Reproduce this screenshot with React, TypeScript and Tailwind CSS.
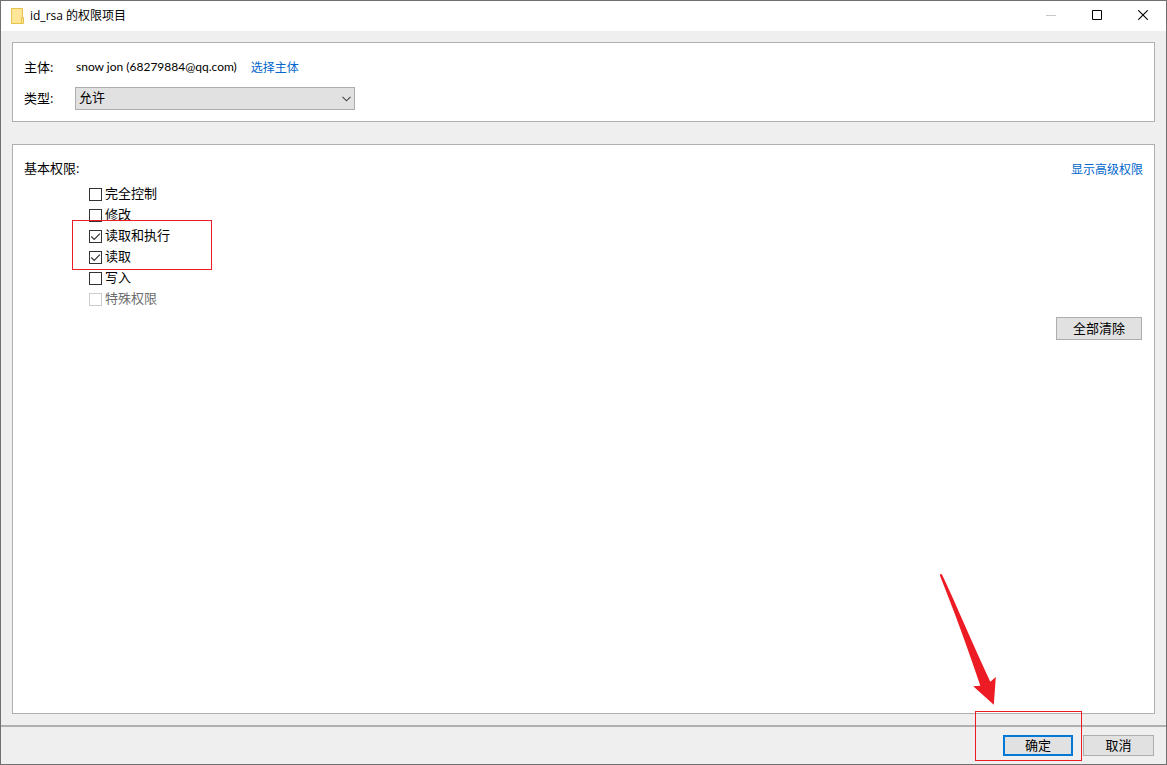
import { useState } from "react";

const initialPermissions = [
  { id: "full", label: "完全控制", checked: false, disabled: false },
  { id: "modify", label: "修改", checked: false, disabled: false },
  { id: "read-execute", label: "读取和执行", checked: true, disabled: false },
  { id: "read", label: "读取", checked: true, disabled: false },
  { id: "write", label: "写入", checked: false, disabled: false },
  { id: "special", label: "特殊权限", checked: false, disabled: true },
];

function FolderIcon() {
  return (
    <svg width="14" height="16" viewBox="0 0 14 16" aria-hidden="true">
      <path d="M0.5 0.5H11.5V15.5H0.5Z" fill="#ffe699" stroke="#e8c34c" />
      <path d="M10.5 9.5H12.5V15.5H10.5Z" fill="#ffe699" stroke="#e8c34c" />
    </svg>
  );
}

function TitleBar() {
  return (
    <header className="flex h-[30px] shrink-0 items-center bg-white pl-[10px]">
      <FolderIcon />
      <h1 className="ml-[5px] flex-1 text-[12px]">id_rsa 的权限项目</h1>
      <div className="flex self-stretch">
        <button type="button" disabled aria-label="最小化" className="flex w-[46px] items-center justify-center text-[#c8c8c8]">
          <svg width="10" height="10" viewBox="0 0 10 10" aria-hidden="true">
            <path d="M0 4.5H10" stroke="currentColor" />
          </svg>
        </button>
        <button type="button" aria-label="最大化" className="flex w-[46px] items-center justify-center pb-0.5">
          <svg width="10" height="10" viewBox="0 0 10 10" aria-hidden="true">
            <path d="M0.5 0.5H9.5V9.5H0.5Z" fill="none" stroke="currentColor" />
          </svg>
        </button>
        <button type="button" aria-label="关闭" className="flex w-[46px] items-center justify-center pb-0.5">
          <svg width="10" height="10" viewBox="0 0 10 10" aria-hidden="true">
            <path d="M0.3 0.3L9.7 9.7M9.7 0.3L0.3 9.7" stroke="currentColor" strokeWidth="1.1" />
          </svg>
        </button>
      </div>
    </header>
  );
}

export default function App() {
  const [permissions, setPermissions] = useState(initialPermissions);

  const toggle = (id: string) =>
    setPermissions((items) => items.map((p) => (p.id === id ? { ...p, checked: !p.checked } : p)));
  const clearAll = () => setPermissions((items) => items.map((p) => ({ ...p, checked: false })));

  return (
    <div className="flex min-h-screen flex-col border border-[#707070] bg-[#efefef] font-['Open_Sans','Noto_Sans_CJK_SC',sans-serif] text-[13px] text-black">
      <TitleBar />

      <main className="flex flex-1 flex-col gap-[22px] p-[11px]">
        <section className="flex flex-col gap-2 border border-[#b0b0b0] bg-white px-[11px] pt-3 pb-[11px]">
          <div className="flex h-6 items-start leading-6">
            <span className="w-[51px]">主体:</span>
            <span className="ml-px font-['Lato',sans-serif] text-[12px]">snow jon (68279884@qq.com)</span>
            <a href="#principal" className="ml-[14px] text-[12px] leading-[26px] text-[#0066cc]">选择主体</a>
          </div>
          <div className="flex items-center">
            <label htmlFor="type" className="w-[51px]">类型:</label>
            <div className="grid w-[280px] items-center">
              <select
                id="type"
                className="col-start-1 row-start-1 h-[23px] appearance-none border border-[#adadad] bg-[#e1e1e1] pr-5 pb-0.5 pl-[3px] leading-[19px]"
              >
                <option>允许</option>
                <option>拒绝</option>
              </select>
              <svg
                className="pointer-events-none col-start-1 row-start-1 mr-1 justify-self-end"
                width="9"
                height="6"
                viewBox="0 0 9 6"
                aria-hidden="true"
              >
                <path d="M0.5 0.8L4.5 4.8L8.5 0.8" fill="none" stroke="#444444" strokeWidth="1.1" />
              </svg>
            </div>
          </div>
        </section>

        <section className="flex flex-1 flex-col border border-[#b0b0b0] bg-white px-[11px] pt-[11px]">
          <div className="flex h-6 items-start justify-between leading-6">
            <h2 id="basic-permissions">基本权限:</h2>
            <a href="#advanced" className="text-[12px] leading-7 text-[#0066cc]">显示高级权限</a>
          </div>
          <div className="relative mt-1 ml-[65px] self-start" role="group" aria-labelledby="basic-permissions">
            {permissions.map((p) => (
              <div key={p.id} className="flex h-[21px] items-start gap-[3px]">
                <span className="mt-1 grid">
                  <input
                    id={p.id}
                    type="checkbox"
                    checked={p.checked}
                    disabled={p.disabled}
                    onChange={() => toggle(p.id)}
                    className="peer col-start-1 row-start-1 size-[13px] appearance-none border border-[#333333] bg-white disabled:border-[#cccccc]"
                  />
                  <svg
                    className="pointer-events-none invisible col-start-1 row-start-1 peer-checked:visible"
                    width="13"
                    height="13"
                    viewBox="0 0 13 13"
                    aria-hidden="true"
                  >
                    <path d="M2.3 6.5L5.2 9.4L10.9 3.7" fill="none" stroke="#333333" strokeWidth="1.2" />
                  </svg>
                </span>
                <label htmlFor={p.id} className={p.disabled ? "leading-[18px] text-[#6d6d6d]" : "leading-[18px]"}>
                  {p.label}
                </label>
              </div>
            ))}
            <div className="pointer-events-none absolute top-9 -left-[17px] h-[50px] w-[140px] border border-[#ed1c24]" />
          </div>
          <button
            type="button"
            onClick={clearAll}
            className="mt-[7px] mr-px flex h-[23px] w-[86px] items-center justify-center self-end border border-[#adadad] bg-[#e1e1e1]"
          >
            全部清除
          </button>
        </section>
      </main>

      <footer className="relative flex justify-end gap-[10px] border-t-2 border-[#b0b0b0] py-2 pr-3">
        <button
          type="button"
          className="flex h-[21px] w-[70px] items-center justify-center border-2 border-[#0078d7] bg-[#e1e1e1]"
        >
          确定
        </button>
        <button
          type="button"
          className="flex h-[21px] w-[71px] items-center justify-center border border-[#adadad] bg-[#e1e1e1]"
        >
          取消
        </button>
        <div className="pointer-events-none absolute right-[84px] bottom-[3px] h-[50px] w-[107px] border border-[#ed1c24]" />
        <svg
          className="pointer-events-none absolute right-[167px] bottom-[59px]"
          width="60"
          height="132"
          viewBox="0 0 60 132"
          aria-hidden="true"
        >
          <path
            d="M1 1.4Q2 0.4 3 1.6C18 33 32 68 51.3 108.7L56.8 104L54.8 131.8L34.2 113.2L41.3 112.7C28 73 15 38 1 2.8Z"
            fill="#ed1c24"
          />
        </svg>
      </footer>
    </div>
  );
}
